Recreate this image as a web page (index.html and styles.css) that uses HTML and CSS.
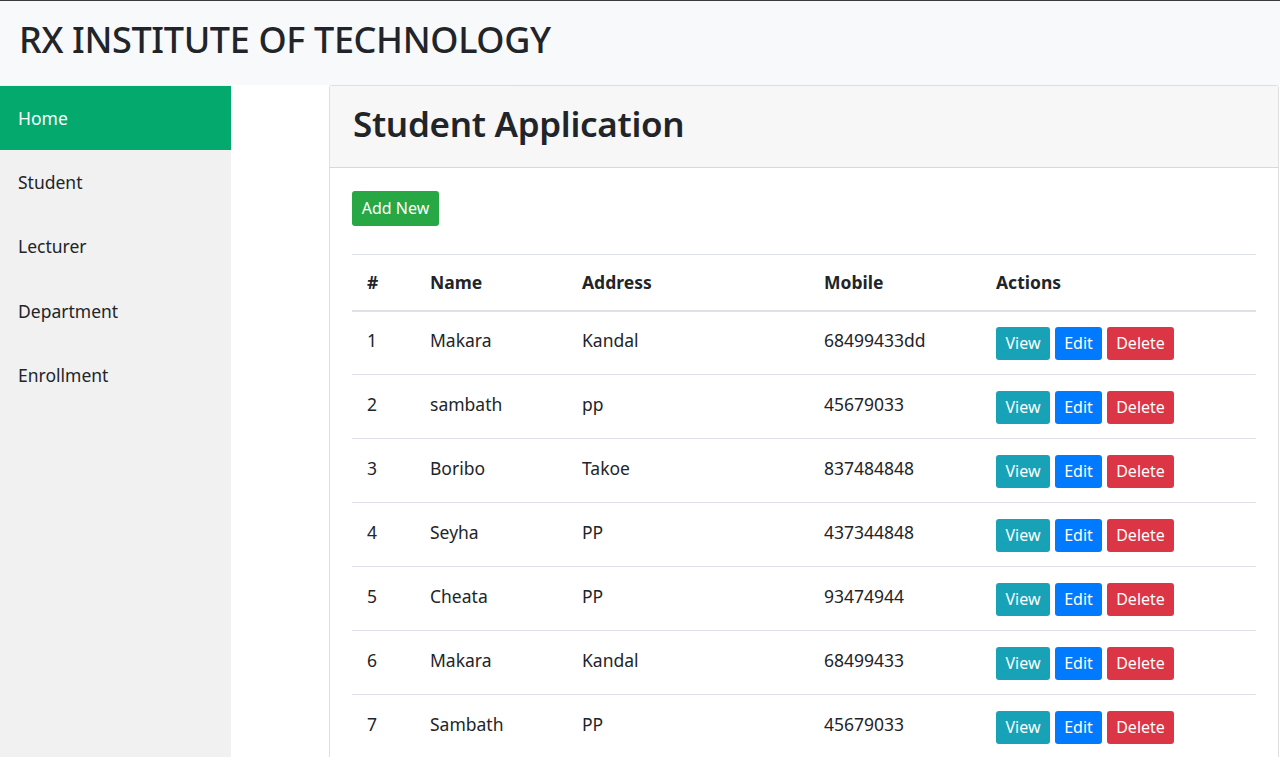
FILE: index.html
```html
<!DOCTYPE html>
<html lang="en">
<head>
<meta charset="utf-8">
<title>RX Institute of Technology</title>
<link rel="stylesheet" href="styles.css">
</head>
<body>
<header class="topbar">
  <h1 class="brand">RX INSTITUTE OF TECHNOLOGY</h1>
</header>
<div class="layout">
  <nav class="sidebar">
    <a class="nav-item active" href="#">Home</a>
    <a class="nav-item" href="#">Student</a>
    <a class="nav-item" href="#">Lecturer</a>
    <a class="nav-item" href="#">Department</a>
    <a class="nav-item" href="#">Enrollment</a>
  </nav>
  <main class="content">
    <section class="card">
      <div class="card-header">
        <h2 class="card-title">Student Application</h2>
      </div>
      <div class="card-body">
        <a class="btn btn-success" href="#">Add New</a>
        <table class="table">
          <colgroup>
            <col class="c-num"><col class="c-name"><col class="c-addr"><col class="c-mob"><col class="c-act">
          </colgroup>
          <thead>
            <tr><th>#</th><th>Name</th><th>Address</th><th>Mobile</th><th>Actions</th></tr>
          </thead>
          <tbody>
            <tr><td>1</td><td>Makara</td><td>Kandal</td><td>68499433dd</td><td class="actions"><a class="btn btn-sm btn-info" href="#">View</a><a class="btn btn-sm btn-primary" href="#">Edit</a><a class="btn btn-sm btn-danger" href="#">Delete</a></td></tr>
            <tr><td>2</td><td>sambath</td><td>pp</td><td>45679033</td><td class="actions"><a class="btn btn-sm btn-info" href="#">View</a><a class="btn btn-sm btn-primary" href="#">Edit</a><a class="btn btn-sm btn-danger" href="#">Delete</a></td></tr>
            <tr><td>3</td><td>Boribo</td><td>Takoe</td><td>837484848</td><td class="actions"><a class="btn btn-sm btn-info" href="#">View</a><a class="btn btn-sm btn-primary" href="#">Edit</a><a class="btn btn-sm btn-danger" href="#">Delete</a></td></tr>
            <tr><td>4</td><td>Seyha</td><td>PP</td><td>437344848</td><td class="actions"><a class="btn btn-sm btn-info" href="#">View</a><a class="btn btn-sm btn-primary" href="#">Edit</a><a class="btn btn-sm btn-danger" href="#">Delete</a></td></tr>
            <tr><td>5</td><td>Cheata</td><td>PP</td><td>93474944</td><td class="actions"><a class="btn btn-sm btn-info" href="#">View</a><a class="btn btn-sm btn-primary" href="#">Edit</a><a class="btn btn-sm btn-danger" href="#">Delete</a></td></tr>
            <tr><td>6</td><td>Makara</td><td>Kandal</td><td>68499433</td><td class="actions"><a class="btn btn-sm btn-info" href="#">View</a><a class="btn btn-sm btn-primary" href="#">Edit</a><a class="btn btn-sm btn-danger" href="#">Delete</a></td></tr>
            <tr><td>7</td><td>Sambath</td><td>PP</td><td>45679033</td><td class="actions"><a class="btn btn-sm btn-info" href="#">View</a><a class="btn btn-sm btn-primary" href="#">Edit</a><a class="btn btn-sm btn-danger" href="#">Delete</a></td></tr>
          </tbody>
        </table>
      </div>
    </section>
  </main>
</div>
</body>
</html>
```
FILE: styles.css
```css
* { box-sizing: border-box; }
html, body { margin: 0; padding: 0; }
body {
  font-family: "Noto Sans", "Open Sans", sans-serif;
  color: #212529;
  background: #fff;
  overflow: hidden;
}
.topbar {
  height: 85px;
  background: #f8f9fa;
  border-top: 1px solid #3a3a3a;
  display: flex;
  align-items: center;
  padding-left: 19px;
  padding-bottom: 6px;
}
.brand {
  margin: 0;
  font-size: 36px;
  font-weight: 500;
  letter-spacing: -0.35px;
  line-height: 1.2;
}
.layout {
  display: flex;
  align-items: stretch;
  min-height: calc(100vh - 85px);
}
.sidebar {
  width: 231px;
  flex: 0 0 231px;
  background: #f1f1f1;
  display: flex;
  flex-direction: column;
  padding-top: 0.5px;
}
.nav-item {
  display: block;
  height: 64.5px;
  line-height: 64.5px;
  padding-left: 18px;
  font-size: 17.5px;
  color: #212529;
  text-decoration: none;
}
.nav-item.active {
  background: #04aa6d;
  color: #fff;
  height: 64px;
}
.content {
  flex: 1;
  padding-left: 98px;
  padding-right: 1px;
}
.card {
  border: 1px solid rgba(0,0,0,.125);
  border-bottom: none;
  border-radius: 3px 3px 0 0;
  background: #fff;
  min-height: 100%;
}
.card-header {
  background: #f7f7f7;
  border-bottom: 1px solid rgba(0,0,0,.125);
  height: 82px;
  display: flex;
  align-items: center;
  padding-left: 23px;
  padding-bottom: 5px;
}
.card-title {
  margin: 0;
  font-size: 35px;
  font-weight: 600;
  letter-spacing: -0.3px;
  line-height: 1.2;
}
.card-body {
  padding: 23px 22px 0 22px;
}
.btn {
  display: inline-block;
  color: #fff;
  text-decoration: none;
  border-radius: 3px;
  font-size: 16px;
  text-align: center;
}
.btn-success {
  background: #28a745;
  height: 35px;
  line-height: 35px;
  width: 87px;
}
.table {
  margin-top: 28px;
  width: 904px;
  border-collapse: collapse;
  table-layout: fixed;
  font-size: 17.5px;
}
.c-num { width: 63px; }
.c-name { width: 152px; }
.c-addr { width: 242px; }
.c-mob { width: 172px; }
.c-act { width: 275px; }
.table th, .table td {
  text-align: left;
  padding: 0 0 0 15px;
  border-top: 1px solid #dee2e6;
  vertical-align: middle;
}
.table th {
  height: 56px;
  font-weight: 700;
  border-bottom: 2px solid #dee2e6;
}
.table td {
  height: 64px;
  padding-bottom: 6px;
}
.table td.actions {
  padding-bottom: 0;
  padding-top: 1px;
}
.btn-sm {
  height: 33px;
  line-height: 33px;
  margin-right: 5px;
}
.btn-info { background: #17a2b8; width: 54px; }
.btn-primary { background: #007bff; width: 47px; }
.btn-danger { background: #dc3545; width: 67px; }
```
